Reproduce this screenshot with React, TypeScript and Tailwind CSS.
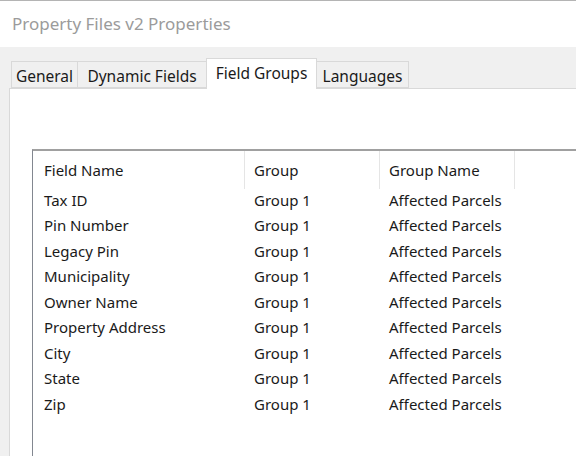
const rows = [
  "Tax ID",
  "Pin Number",
  "Legacy Pin",
  "Municipality",
  "Owner Name",
  "Property Address",
  "City",
  "State",
  "Zip",
]

const tabs = [
  { label: "General", w: "w-[67px]" },
  { label: "Dynamic Fields", w: "w-[130px]" },
  { label: "Field Groups", w: "w-[111px]" },
  { label: "Languages", w: "w-[93px]" },
]

export default function App() {
  return (
    <div className="w-[576px] h-[456px] overflow-hidden flex flex-col bg-[#f0f0f0] text-[#1a1a1a] font-['Noto_Sans','Liberation_Sans',sans-serif]">
      {/* title */}
      <div className="h-[47px] shrink-0 bg-white border-t border-[#b4b4b4] pl-[12px] pt-[11px] text-[17px] leading-[24px] text-[#9b9b9b]">
        Property Files v2 Properties
      </div>

      {/* tabs */}
      <div className="flex items-end pl-[11px] h-[41px] shrink-0">
        {tabs.map(t =>
          t.label === "Field Groups" ? (
            <div key={t.label} className={`${t.w} h-[31px] -ml-px text-center pt-[2px] bg-white border border-b-0 border-[#d9d9d9] text-[15.5px] leading-[24px] relative top-px z-10`}>
              {t.label}
            </div>
          ) : (
            <div key={t.label} className={`${t.w} h-[27px] -ml-px first:ml-0 text-center pt-[2px] bg-[#f0f0f0] border border-[#d9d9d9] text-[15.5px] leading-[24px]`}>
              {t.label}
            </div>
          )
        )}
      </div>

      {/* panel */}
      <div className="flex-1 ml-[9px] bg-white border-l border-t border-[#d9d9d9] pt-[60px] pl-[22px] flex flex-col">
        <div className="flex-1 border-l border-t-2 border-[#a0a0a0] border-l-[#828790] text-[15px]">
          <div className="flex h-[38px] items-center">
            <div className="w-[212px] pl-[11px] h-full flex items-center border-r border-[#e5e5e5]">Field Name</div>
            <div className="w-[135px] pl-[9px] h-full flex items-center border-r border-[#e5e5e5]">Group</div>
            <div className="w-[135px] pl-[9px] h-full flex items-center border-r border-[#e5e5e5]">Group Name</div>
          </div>
          <div className="-mt-[2px]">
            {rows.map(r => (
              <div key={r} className="flex h-[25.5px] items-center">
                <div className="w-[212px] pl-[11px]">{r}</div>
                <div className="w-[135px] pl-[9px]">Group 1</div>
                <div className="w-[135px] pl-[9px]">Affected Parcels</div>
              </div>
            ))}
          </div>
        </div>
      </div>
    </div>
  )
}
